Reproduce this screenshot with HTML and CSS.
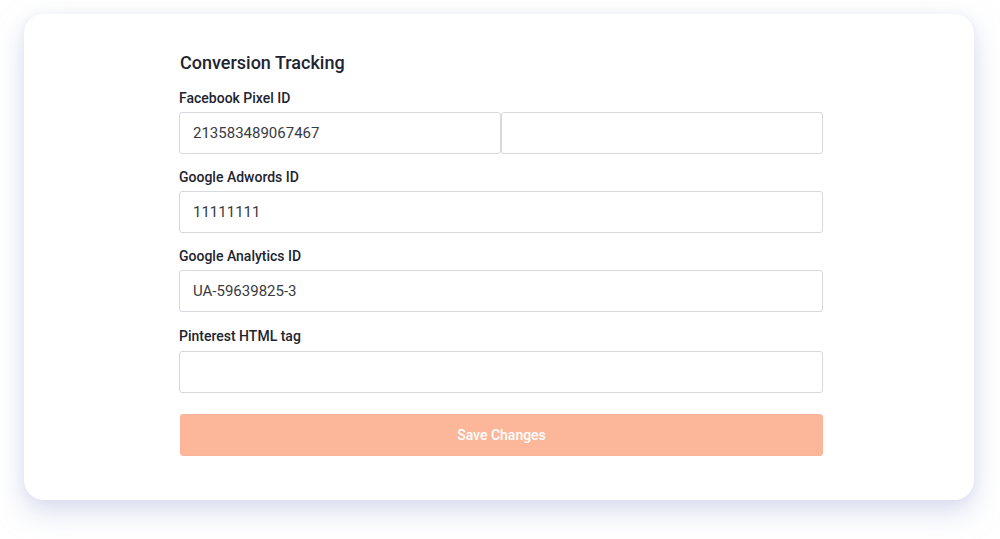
FILE: index.html
```html
<!DOCTYPE html>
<html lang="en">
<head>
<meta charset="utf-8">
<title>Conversion Tracking</title>
<link rel="stylesheet" href="styles.css">
</head>
<body>
<div class="card">
  <form class="form">
    <h2 class="title">Conversion Tracking</h2>
    <div class="field">
      <label class="label">Facebook Pixel ID</label>
      <div class="pair">
        <input class="input" type="text" value="213583489067467">
        <input class="input" type="text" value="">
      </div>
    </div>
    <div class="field">
      <label class="label">Google Adwords ID</label>
      <input class="input" type="text" value="11111111">
    </div>
    <div class="field field-wide">
      <label class="label">Google Analytics ID</label>
      <input class="input" type="text" value="UA-59639825-3">
    </div>
    <div class="field field-last">
      <label class="label">Pinterest HTML tag</label>
      <input class="input" type="text" value="">
    </div>
    <button class="btn" type="button">Save Changes</button>
  </form>
</div>
</body>
</html>
```

FILE: styles.css
```css
* { box-sizing: border-box; }
html, body { margin: 0; padding: 0; background: #ffffff; }
body {
  font-family: Roboto, "Liberation Sans", Arial, sans-serif;
  padding: 14px 26px 0 24px;
  min-height: 539px;
}
.card {
  width: 950px;
  height: 486px;
  background: #fff;
  border-radius: 20px;
  box-shadow: 0 12px 28px rgba(186, 192, 226, 0.5), 0 2px 12px rgba(210, 214, 235, 0.35);
  padding: 37px 151px 0 155px;
}
.form { display: flex; flex-direction: column; }
.title {
  margin: 0 0 13px 1px;
  font-size: 18px;
  line-height: 24px;
  font-weight: 500;
  color: #1e2430;
}
.field { display: flex; flex-direction: column; gap: 4px; margin-bottom: 13px; }
.field-wide { margin-bottom: 14px; }
.field-last { gap: 5px; margin-bottom: 21px; }
.label {
  font-size: 14px;
  line-height: 20px;
  font-weight: 500;
  color: #1e2430;
}
.pair { display: flex; }
.pair .input { flex: 1; min-width: 0; }
.input {
  height: 42px;
  width: 100%;
  border: 1px solid #d8d9de;
  border-radius: 3px;
  padding: 0 13px;
  font-family: Roboto, "Liberation Sans", Arial, sans-serif;
  font-size: 15px;
  color: #383b42;
  background: #fff;
  outline: none;
}
.btn {
  margin-left: 1px;
  height: 42px;
  border: 1px solid #fbb499;
  border-radius: 3px;
  background: #fcb79b;
  color: #fff;
  font-family: Roboto, "Liberation Sans", Arial, sans-serif;
  font-size: 14px;
  font-weight: 500;
}
```
